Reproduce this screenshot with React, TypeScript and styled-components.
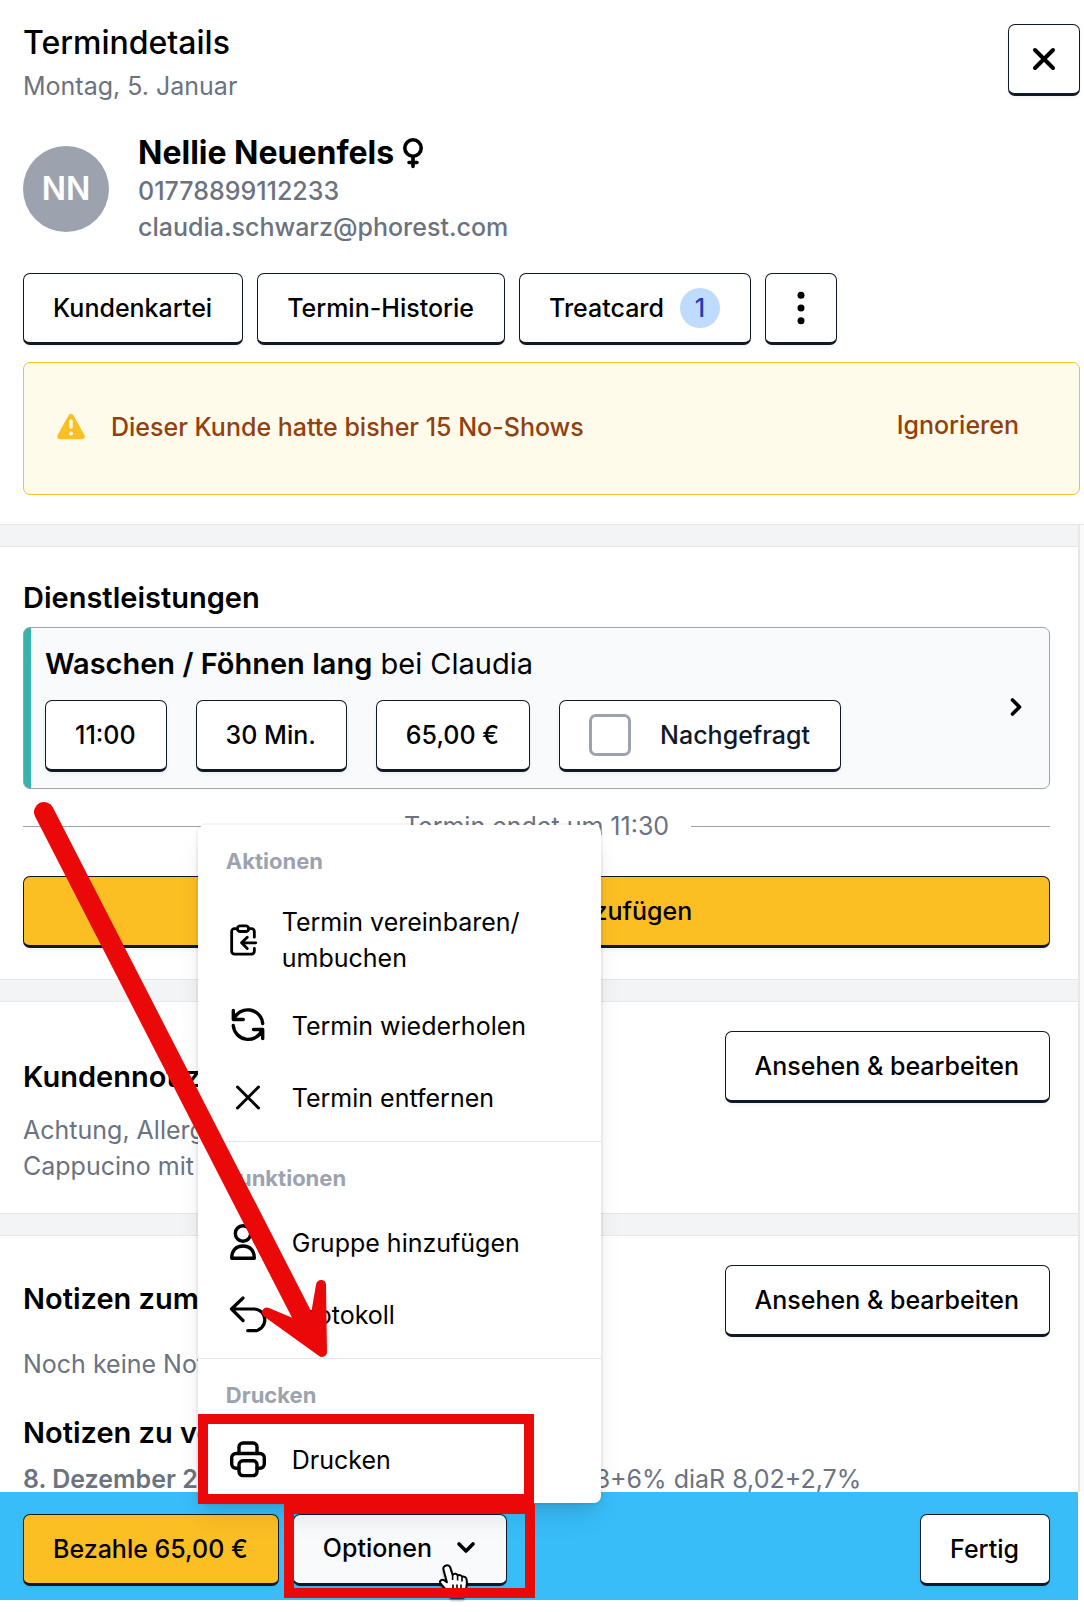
import React from "react";
import styled, { createGlobalStyle, css } from "styled-components";

const ink = "#111827";
const muted = "#6b7280";
const soft = "#9ca3af";
const line = "#e5e7eb";
const amber = "#fbbf24";
const mark = "#eb0808";

const GlobalStyle = createGlobalStyle`
  *, *::before, *::after { box-sizing: border-box; }
  body {
    margin: 0;
    background: #fff;
    color: #000;
    font-family: Inter, "Liberation Sans", sans-serif;
    font-size: 25px;
    line-height: 36px;
  }
  h1, h2, h3, p { margin: 0; }
  button, input { font: inherit; color: inherit; }
  svg { display: block; flex: none; }
`;

const Page = styled.div`
  display: flex;
  flex-direction: column;
  height: 100vh;
  min-height: 1200px;
  padding-bottom: 12px;
`;

const Header = styled.header`
  flex: none;
  padding: 18px 4px 29px 23px;
  border-bottom: 1px solid ${line};
`;

const TitleRow = styled.div`
  display: flex;
  justify-content: space-between;
  align-items: flex-end;
`;

const Title = styled.h1`
  font-size: 32px;
  line-height: 50px;
  font-weight: 500;
`;

const DateText = styled.p`
  color: ${muted};
`;

const raised = css`
  display: inline-flex;
  align-items: center;
  justify-content: center;
  height: 72px;
  padding: 0 30px 0 29px;
  border: 1px solid ${ink};
  border-bottom-width: 3px;
  border-radius: 7px;
  background: #fff;
  font-weight: 500;
  white-space: nowrap;
  box-shadow: 0 2px 4px rgba(0, 0, 0, 0.05);
`;

const Button = styled.button<{ $tone?: "amber" | "hover"; $block?: boolean }>`
  ${raised}
  flex: none;
  gap: 16px;
  cursor: pointer;
  ${(p) => p.$tone === "amber" && `background: ${amber};`}
  ${(p) => p.$tone === "hover" && "background: #f9fafb; gap: 24px; padding-bottom: 3px;"}
  ${(p) => p.$block && "width: 100%;"}
`;

const SquareButton = styled(Button)`
  width: 72px;
  padding: 0;
`;

const CloseButton = styled(SquareButton)`
  align-self: flex-start;
  margin-top: 6px;
`;

const Client = styled.div`
  display: flex;
  align-items: center;
  gap: 29px;
  margin: 29px 0 28px;
`;

const Avatar = styled.div`
  display: grid;
  place-items: center;
  width: 86px;
  height: 86px;
  border-radius: 50%;
  background: ${soft};
  color: #fff;
  font-size: 32px;
  font-weight: 600;
`;

const ClientName = styled.h2`
  display: flex;
  align-items: center;
  gap: 9px;
  font-size: 32px;
  line-height: 40px;
  font-weight: 700;
`;

const ContactLine = styled.p`
  color: ${muted};
  font-weight: 500;
`;

const ButtonRow = styled.div<{ $gap: number }>`
  display: flex;
  gap: ${(p) => p.$gap}px;
`;

const Count = styled.span`
  display: grid;
  place-items: center;
  width: 40px;
  height: 40px;
  border-radius: 50%;
  background: #bfdbfe;
  color: #1e40af;
`;

const Alert = styled.div`
  display: flex;
  align-items: center;
  gap: 26px;
  height: 133px;
  margin-top: 17px;
  padding: 0 60px 3px 33px;
  border: 1px solid ${amber};
  border-radius: 7px;
  background: #fffbeb;
  color: #92400e;
  font-weight: 500;
`;

const AlertText = styled.p`
  flex: 1;
`;

const TextButton = styled.button`
  padding: 0 0 4px;
  border: 0;
  background: none;
  font-weight: 500;
  cursor: pointer;
`;

const Body = styled.div`
  display: flex;
  flex: 1;
  min-height: 0;
`;

const Main = styled.main`
  flex: 1;
  min-width: 0;
  overflow: hidden;
`;

const Gutter = styled.div`
  flex: none;
  width: 6px;
  border-left: 2px solid #e8e8e8;
  background: #fafafa;
`;

const Band = styled.div<{ $first?: boolean }>`
  height: ${(p) => (p.$first ? 22 : 23)}px;
  border: solid ${line};
  border-width: ${(p) => (p.$first ? "0 0 1px" : "1px 0")};
  background: #f3f4f6;
`;

const Section = styled.section<{ $bottom?: number }>`
  padding: 29px 28px ${(p) => p.$bottom ?? 29}px 23px;
`;

const Heading = styled.h3`
  font-size: 29px;
  line-height: 44px;
  font-weight: 600;
`;

const ServiceCard = styled.div`
  display: flex;
  align-items: center;
  justify-content: space-between;
  margin-top: 7px;
  padding: 14px 26px 16px 21px;
  border: 1px solid ${soft};
  border-radius: 7px;
  background: linear-gradient(to right, #38b2ac 7px, #f9fafb 7px);
`;

const ServiceName = styled.p`
  margin-bottom: 14px;
  font-size: 29px;
  line-height: 44px;

  strong { font-weight: 600; }
`;

const CheckLabel = styled.label`
  ${raised}
  gap: 29px;
  color: ${ink};
`;

const Checkbox = styled.input`
  appearance: none;
  width: 42px;
  height: 42px;
  margin: 0;
  border: 3px solid ${soft};
  border-radius: 7px;
  background: #fff;
`;

const EndsAt = styled.div`
  display: flex;
  align-items: center;
  gap: 22px;
  margin: 19px 0 32px;
  color: ${muted};

  &::before, &::after {
    content: "";
    flex: 1;
    height: 1px;
    background: ${soft};
  }
`;

const Notes = styled.div`
  display: flex;
  align-items: flex-start;
  justify-content: space-between;
  gap: 29px;
`;

const NoteText = styled.div<{ $top: number; $gap: number }>`
  display: grid;
  gap: ${(p) => p.$gap}px;
  padding-top: ${(p) => p.$top}px;
`;

const Muted = styled.p`
  color: ${muted};

  strong { font-weight: 600; }
`;

const History = styled.div`
  display: grid;
  gap: 6px;
  margin-top: 29px;
  white-space: nowrap;
`;

const Footer = styled.footer`
  display: flex;
  flex: none;
  gap: 14px;
  margin-right: 6px;
  padding: 22px 28px 14px 23px;
  background: #38bdf8;
`;

const Spacer = styled.div`
  flex: 1;
`;

const MenuAnchor = styled.div`
  position: relative;
  height: 72px;
`;

const Menu = styled.div`
  position: absolute;
  z-index: 2;
  left: -95px;
  bottom: calc(100% + 11px);
  width: 403px;
  border-radius: 7px;
  background: #fff;
  box-shadow: 0 0 0 2px rgba(0, 0, 0, 0.04), 0 18px 27px -5px rgba(0, 0, 0, 0.1),
    0 7px 11px -4px rgba(0, 0, 0, 0.08);
`;

const MenuGroup = styled.div`
  padding: 7px 0;

  & + & { border-top: 1px solid ${line}; }
`;

const MenuHeading = styled.p`
  padding: 14px 28px;
  color: ${soft};
  font-size: 22px;
  line-height: 30px;
  font-weight: 700;
`;

const MenuItem = styled.button`
  position: relative;
  display: flex;
  align-items: center;
  gap: 22px;
  width: 100%;
  padding: 14px 28px;
  border: 0;
  background: none;
  text-align: left;
  cursor: pointer;
`;

const ItemMark = styled.span`
  position: absolute;
  inset: -10px 67px -8px 0;
  border: 10px solid ${mark};
`;

const OptionsMark = styled.span`
  position: absolute;
  z-index: 3;
  inset: -10px -28px -12px -9px;
  border: 10px solid ${mark};
  pointer-events: none;
`;

const ArrowMark = styled.svg`
  position: absolute;
  z-index: 4;
  left: -170px;
  top: -30px;
  pointer-events: none;
`;

const HandCursor = styled.svg`
  position: absolute;
  z-index: 2;
  left: 144px;
  top: 48px;
  filter: drop-shadow(0 2px 1px rgba(0, 0, 0, 0.35));
  pointer-events: none;
`;

function Icon({ size = 44, box = 44, stroke = 3, children }: {
  size?: number; box?: number; stroke?: number; children: React.ReactNode;
}) {
  return (
    <svg width={size} height={size} viewBox={`0 0 ${box} ${box}`} fill="none" stroke="currentColor"
      strokeWidth={stroke} strokeLinecap="round" strokeLinejoin="round" aria-hidden="true">
      {children}
    </svg>
  );
}

export default function App() {
  return (
    <>
      <GlobalStyle />
      <Page>
        <Header>
          <TitleRow>
            <div>
              <Title>Termindetails</Title>
              <DateText>Montag, 5. Januar</DateText>
            </div>
            <CloseButton aria-label="Schließen">
              <Icon size={24} box={24} stroke={4}><path d="M3 3l18 18M21 3L3 21" /></Icon>
            </CloseButton>
          </TitleRow>

          <Client>
            <Avatar>NN</Avatar>
            <div>
              <ClientName>
                Nellie Neuenfels
                <svg width="20" height="32" viewBox="0 0 20 32" fill="none" stroke="currentColor"
                  strokeWidth="3.6" strokeLinecap="round" aria-label="weiblich">
                  <circle cx="10" cy="11" r="8.200" />
                  <path d="M10 19.500v10M6 25.500h8" />
                </svg>
              </ClientName>
              <ContactLine>01778899112233</ContactLine>
              <ContactLine>claudia.schwarz@phorest.com</ContactLine>
            </div>
          </Client>

          <ButtonRow $gap={14}>
            <Button>Kundenkartei</Button>
            <Button>Termin-Historie</Button>
            <Button>Treatcard <Count>1</Count></Button>
            <SquareButton aria-label="Mehr">
              <svg width="8" height="34" viewBox="0 0 8 34" aria-hidden="true">
                <circle cx="4" cy="4.3" r="3.5" />
                <circle cx="4" cy="17" r="3.5" />
                <circle cx="4" cy="29.7" r="3.5" />
              </svg>
            </SquareButton>
          </ButtonRow>

          <Alert role="alert">
            <svg width="28" height="28" viewBox="0 0 28 28" aria-hidden="true">
              <path d="M14 3.600L25 23.400H3z" fill={amber} stroke={amber} strokeWidth="5.500" strokeLinejoin="round" />
              <path d="M14 8v6" stroke="#fffbeb" strokeWidth="3.4" strokeLinecap="round" />
              <circle cx="14" cy="20.500" r="2" fill="#fffbeb" />
            </svg>
            <AlertText>Dieser Kunde hatte bisher 15 No-Shows</AlertText>
            <TextButton>Ignorieren</TextButton>
          </Alert>
        </Header>

        <Body>
          <Main>
            <Band $first />
            <Section $bottom={31}>
              <Heading>Dienstleistungen</Heading>
              <ServiceCard>
                <div>
                  <ServiceName><strong>Waschen / Föhnen lang</strong> bei Claudia</ServiceName>
                  <ButtonRow $gap={29}>
                    <Button>11:00</Button>
                    <Button>30 Min.</Button>
                    <Button>65,00 €</Button>
                    <CheckLabel><Checkbox type="checkbox" />Nachgefragt</CheckLabel>
                  </ButtonRow>
                </div>
                <svg width="14" height="20" viewBox="0 0 14 20" fill="none" stroke="currentColor"
                  strokeWidth="3.6" strokeLinecap="round" strokeLinejoin="round" aria-hidden="true">
                  <path d="M3.5 3l7 7-7 7" />
                </svg>
              </ServiceCard>
              <EndsAt>Termin endet um 11:30</EndsAt>
              <Button $tone="amber" $block>Dienstleistung hinzufügen</Button>
            </Section>

            <Band />
            <Section>
              <Notes>
                <NoteText $top={24} $gap={13}>
                  <Heading>Kundennotizen</Heading>
                  <Muted>Achtung, Allergie gegen Nüsse! Trinkt gerne:<br />Cappucino mit Hafermilch</Muted>
                </NoteText>
                <Button>Ansehen &amp; bearbeiten</Button>
              </Notes>
            </Section>

            <Band />
            <Section>
              <Notes>
                <NoteText $top={12} $gap={25}>
                  <Heading>Notizen zum Termin</Heading>
                  <Muted>Noch keine Notizen</Muted>
                </NoteText>
                <Button>Ansehen &amp; bearbeiten</Button>
              </Notes>
              <History>
                <Heading>Notizen zu vorherigen Terminen</Heading>
                <Muted><strong>8. Dezember 2025</strong> Ansatz Farbe neutral: diaL 7,13+6% diaR 8,02+2,7%</Muted>
              </History>
            </Section>
          </Main>
          <Gutter />
        </Body>

        <Footer>
          <Button $tone="amber">Bezahle 65,00 €</Button>
          <MenuAnchor>
            <Button $tone="hover" aria-haspopup="menu" aria-expanded="true">
              Optionen
              <svg width="20" height="14" viewBox="0 0 20 14" fill="none" stroke="currentColor"
                strokeWidth="3.6" strokeLinecap="round" strokeLinejoin="round" aria-hidden="true">
                <path d="M3 3l7 7 7-7" />
              </svg>
            </Button>
            <HandCursor width="34" height="38" viewBox="0 0 34 38" aria-hidden="true">
              <path
                d="M9 3.5c2-.8 3.8.4 4.400 2.400l2.200 7c1.200-1.700 4.400-1.300 5 .6 1.500-1 4-.4 4.400 1.400 1.500-.8 4 .200 4.400 2 .8 3.600.400 8.500-1.400 12.500l-1.600 6H14l-2.500-4.500c-2-3-5.500-6-8-9.500-1.500-2.300 1-4.500 3.400-3.200l3 2L6.500 7.500C6 5.800 7 4 9 3.500z"
                fill="#fff" stroke="#000" strokeWidth="2" strokeLinejoin="round" />
              <path d="M15.600 13v5M20.600 14v4.500M25 15.500v4M16 22.500v9M20 22.500v9M24 22.500v9" stroke="#000" strokeWidth="1.600" />
            </HandCursor>
            <OptionsMark />

            <Menu role="menu">
              <MenuGroup>
                <MenuHeading>Aktionen</MenuHeading>
                <MenuItem role="menuitem">
                  <Icon size={34} box={24} stroke={2}>
                    <rect x="8" y="2" width="8" height="4" rx="2" />
                    <path d="M8 4H6a2 2 0 0 0-2 2v14a2 2 0 0 0 2 2h12a2 2 0 0 0 2-2v-2" />
                    <path d="M16 4h2a2 2 0 0 1 2 2v4M21 14H11M15 10l-4 4 4 4" />
                  </Icon>
                  <span>Termin vereinbaren/<br />umbuchen</span>
                </MenuItem>
                <MenuItem role="menuitem">
                  <Icon stroke={3.4}>
                    <path d="M7.300 6.500v9h10M7.800 15.200A15 14.800 0 0 1 36.700 19.500" />
                    <path d="M36.700 34.500v-9H27.500M36.200 26A15 14.800 0 0 1 7.300 21.500" />
                  </Icon>
                  Termin wiederholen
                </MenuItem>
                <MenuItem role="menuitem">
                  <Icon><path d="M11.500 11l21 21M32.500 11l-21 21" /></Icon>
                  Termin entfernen
                </MenuItem>
              </MenuGroup>
              <MenuGroup>
                <MenuHeading>Funktionen</MenuHeading>
                <MenuItem role="menuitem">
                  <Icon stroke={3.4}>
                    <circle cx="17" cy="12.500" r="7.700" />
                    <path d="M5.700 37.300C5.700 29.500 10 25 17 25s11.300 4.500 11.300 12.300z" />
                    <path d="M28.500 20c5.500-.5 6.500-5 5.500-8M38 37h1.500c0-4-1-6.500-3.500-9" />
                  </Icon>
                  Gruppe hinzufügen
                </MenuItem>
                <MenuItem role="menuitem">
                  <Icon stroke={3.200}>
                    <path d="M17 5L5.500 16 17 27.500M5.500 16H28a10.800 10.800 0 0 1 0 21.700h-6.300" />
                  </Icon>
                  Protokoll
                </MenuItem>
              </MenuGroup>
              <MenuGroup>
                <MenuHeading>Drucken</MenuHeading>
                <MenuItem role="menuitem">
                  <Icon stroke={3.400}>
                    <path d="M13 15.500V9a4 4 0 0 1 4-4h10a4 4 0 0 1 4 4v6.500" />
                    <path d="M13 30.300H10a4.300 4.300 0 0 1-4.300-4.300v-6.200a4.300 4.300 0 0 1 4.300-4.300h24a4.300 4.300 0 0 1 4.300 4.300V26a4.300 4.300 0 0 1-4.300 4.300h-3" />
                    <rect x="13" y="22.700" width="18" height="14.900" rx="4" />
                  </Icon>
                  Drucken
                  <ItemMark />
                </MenuItem>
              </MenuGroup>
              <ArrowMark width="310" height="570" viewBox="28 795 310 570" aria-hidden="true">
                <path d="M44 812L308 1327" stroke={mark} strokeWidth="20" strokeLinecap="round" />
                <path d="M321 1285L322 1352 267 1312.500 304 1328 314 1326z" fill={mark} stroke={mark}
                  strokeWidth="10" strokeLinejoin="round" />
              </ArrowMark>
            </Menu>
          </MenuAnchor>
          <Spacer />
          <Button>Fertig</Button>
        </Footer>
      </Page>
    </>
  );
}
